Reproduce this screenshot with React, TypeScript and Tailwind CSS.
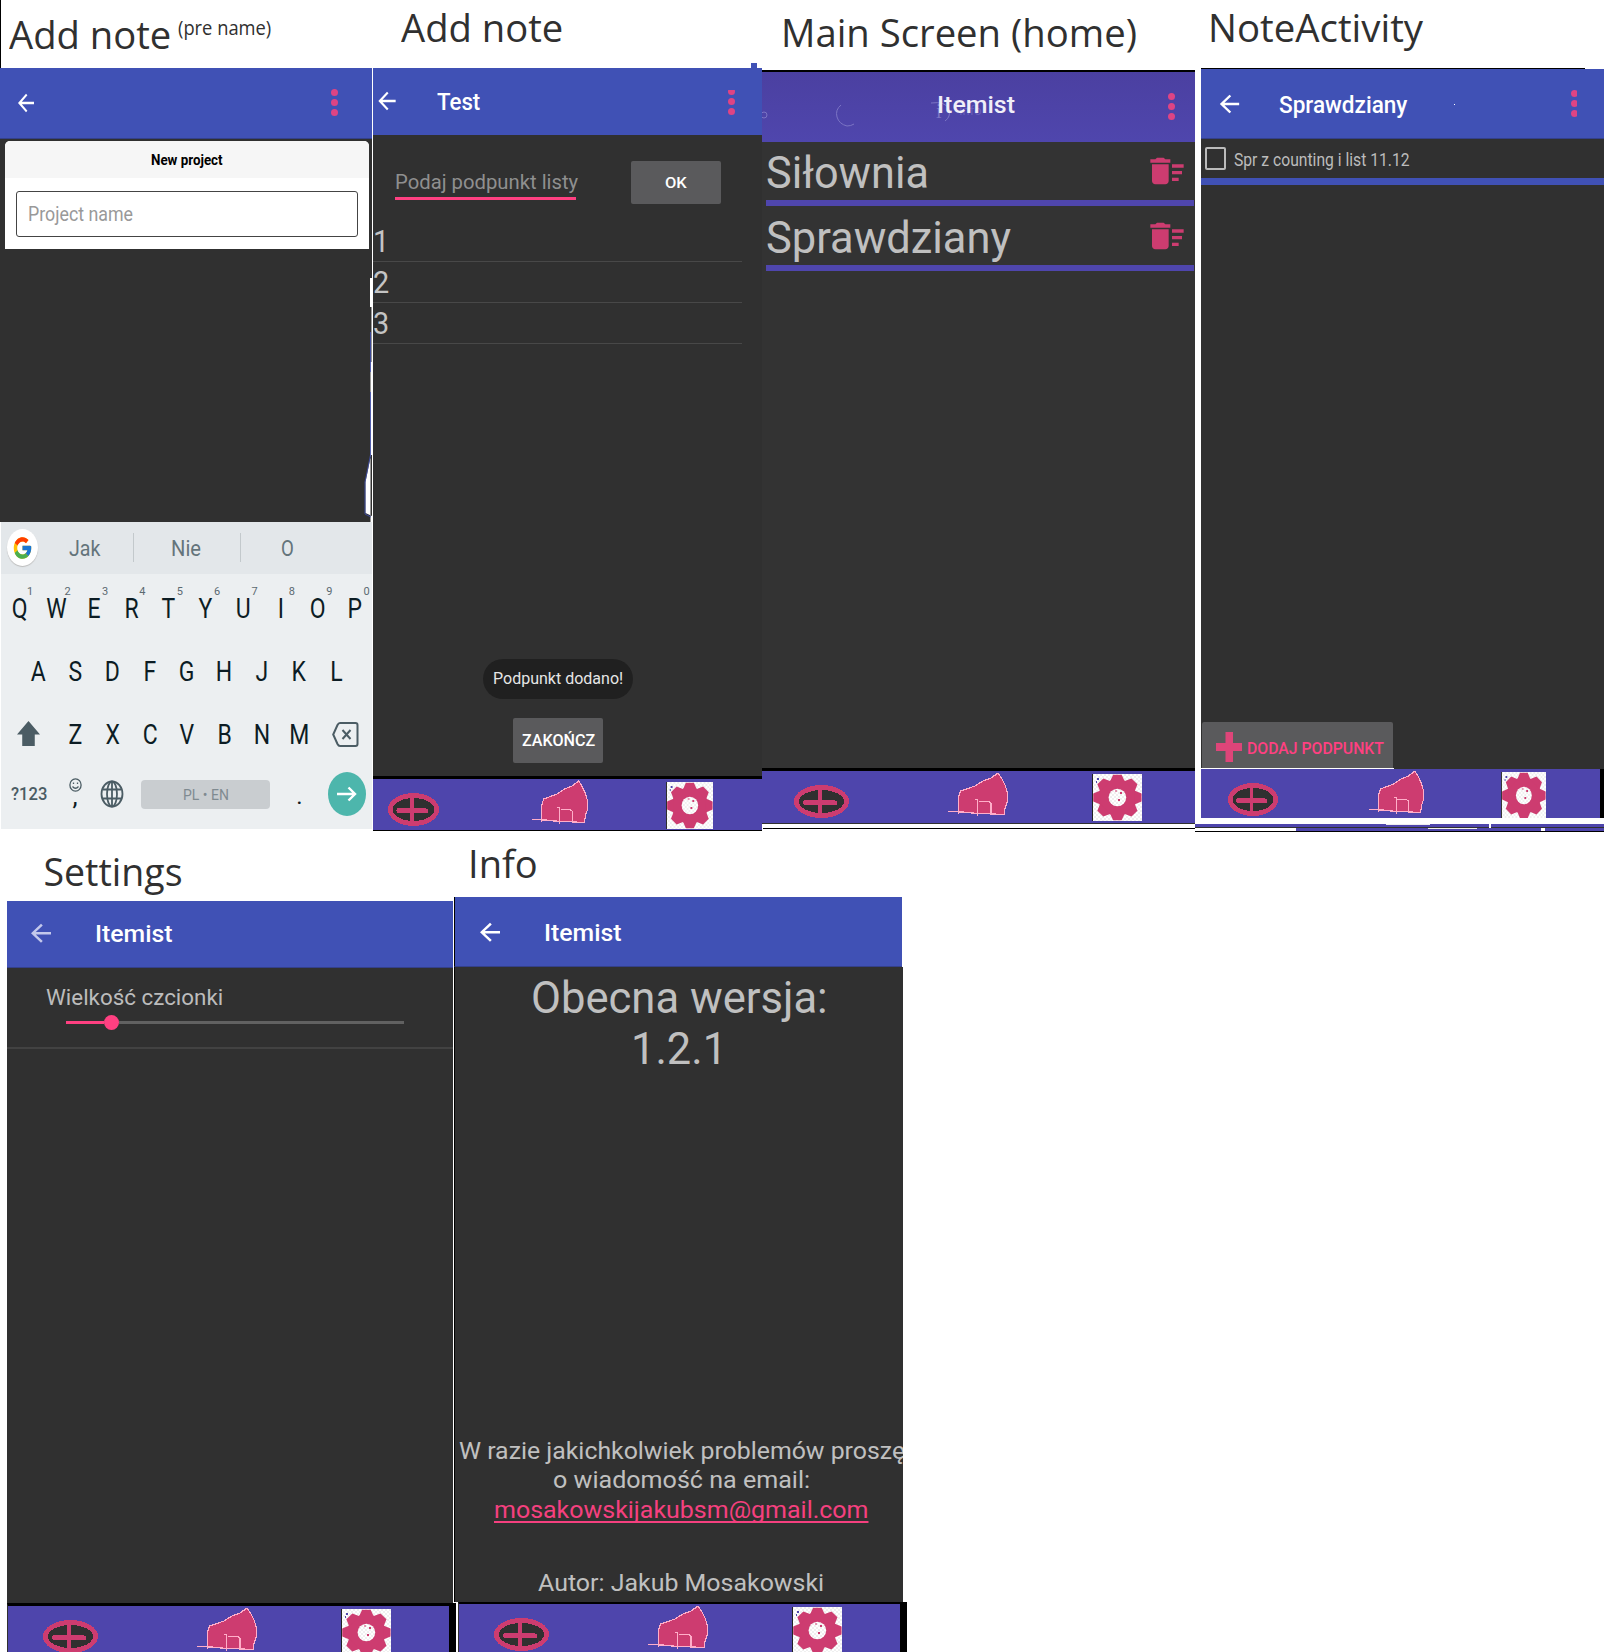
import { useLayoutEffect, useRef, useState, type ReactNode } from "react";
import { MdArrowBack, MdDeleteSweep } from "react-icons/md";
import { FcGoogle } from "react-icons/fc";

/** Single line of text stretched horizontally so that it fills exactly `w` pixels. */
function Fit({ w, className = "", children }: { w: number; className?: string; children: ReactNode }) {
  const ref = useRef<HTMLSpanElement>(null);
  const [scale, setScale] = useState(1);
  useLayoutEffect(() => {
    if (ref.current) setScale(w / ref.current.offsetWidth);
  }, [w]);
  return (
    <div className={`shrink-0 leading-none whitespace-nowrap ${className}`} style={{ width: w }}>
      <span ref={ref} className="inline-block origin-left align-top leading-none" style={{ transform: `scaleX(${scale})` }}>
        {children}
      </span>
    </div>
  );
}

function Title({ w, className, children }: { w: number; className: string; children: ReactNode }) {
  return (
    <Fit w={w} className={`font-['Open_Sans',sans-serif] text-[37.5px] text-[#303030] ${className}`}>
      {children}
    </Fit>
  );
}

function Arrow({ className }: { className: string }) {
  return <MdArrowBack preserveAspectRatio="none" className={`shrink-0 ${className}`} />;
}

function Dots({ className }: { className: string }) {
  return (
    <div className={`flex shrink-0 flex-col gap-[3px] overflow-hidden ${className}`}>
      <i className="size-[7px] shrink-0 rounded-full bg-[#de4484]" />
      <i className="size-[7px] shrink-0 rounded-full bg-[#de4484]" />
      <i className="size-[7px] shrink-0 rounded-full bg-[#de4484]" />
    </div>
  );
}

function PlusIcon({ className }: { className: string }) {
  return (
    <svg viewBox="0 0 55 33" preserveAspectRatio="none" shapeRendering="crispEdges" className={`h-[33px] shrink-0 ${className}`}>
      <ellipse cx="27.5" cy="16.5" rx="27.5" ry="16.5" fill="#cd3c70" />
      <ellipse cx="27.5" cy="16.5" rx="22.5" ry="11.5" fill="#303030" />
      <path d="M26 3v27" stroke="#cd3c70" strokeWidth="4" />
      <path d="M11.5 17.5L41 18" stroke="#cd3c70" strokeWidth="5" strokeLinecap="round" />
    </svg>
  );
}

function HouseIcon({ className }: { className: string }) {
  return (
    <svg viewBox="0 0 60 44" preserveAspectRatio="none" shapeRendering="crispEdges" className={`h-[44px] shrink-0 ${className}`}>
      <path
        d="M50 1L43 6 35 9 27 14 12.5 19 10.5 25V40L24 41 56.5 42.5 57 36 59.3 30V20L57 13 54 7Z"
        fill="#cd3c70"
        stroke="#ffaec9"
        strokeWidth="1.2"
      />
      <path d="M0 39.5H11L24 41M10.5 38v4M27 27.5h2.6V44M31 29.5h9.5l2.5 1.5V42.5" fill="none" stroke="#ffaec9" strokeWidth="1.2" />
    </svg>
  );
}

function GearIcon({ className }: { className: string }) {
  return (
    <svg viewBox="0 0 50 47" preserveAspectRatio="none" className={`h-[47px] shrink-0 ${className}`}>
      <defs>
        <pattern id="checker" width="4" height="4" patternUnits="userSpaceOnUse">
          <path d="M0 0h4v4H0z" fill="#fff" />
          <path d="M0 0h2v2H0zM2 2h2v2H2z" fill="#f0f0f0" />
        </pattern>
      </defs>
      <path d="M0 0h50v47H0z" fill="url(#checker)" />
      <path d="M0 0h1v47H0z" fill="#222" />
      <path d="M5 4h2v2H5zM4 7h1v2H4z" fill="#4e45ac" />
      <g transform="translate(25.4 23.5) scale(1.06 1)" fill="#cd3c70">
        <circle r="18" />
        {[0, 45, 90, 135, 180, 225, 270, 315].map((a) => (
          <path key={a} d="M-4-22.8H4L7-16H-7Z" transform={`rotate(${a})`} />
        ))}
      </g>
      <circle cx="25.4" cy="23.5" r="8.8" fill="url(#checker)" />
      <path d="M23 16.500h2v1h-2zM28 18h2v2h-2zM26 25h2v2h-2z" fill="#cd3c70" />
    </svg>
  );
}

function Keys({ letters, className }: { letters: string; className: string }) {
  return (
    <div className={`flex shrink-0 ${className}`}>
      {letters.split("").map((c) => (
        <span key={c} className="flex w-[37.33px] shrink-0 justify-center">
          <span className="-ml-px scale-x-[.82] text-[28px] leading-none text-[#0c1c24]">{c}</span>
        </span>
      ))}
    </div>
  );
}

function Keyboard() {
  return (
    <div className="ml-px h-[307px] w-[372px] overflow-hidden bg-[#eceff1]">
      <div className="flex h-[52px] bg-[#e3e7ea] text-[21.5px] text-[#64747b]">
        <div className="mt-[7px] ml-[6px] flex h-[37px] w-[31px] shrink-0 items-center justify-center rounded-[50%] bg-white shadow-[0_1px_1px_#bbb]">
          <FcGoogle preserveAspectRatio="none" className="h-[26px] w-[21px]" />
        </div>
        <Fit w={31} className="mt-[16px] ml-[31px]">Jak</Fit>
        <i className="mt-[11px] ml-[33px] h-[29px] w-px bg-[#c3c9cc]" />
        <Fit w={30} className="mt-[16px] ml-[37px]">Nie</Fit>
        <i className="mt-[11px] ml-[39px] h-[29px] w-px bg-[#c3c9cc]" />
        <Fit w={13} className="mt-[16px] ml-[40px]">O</Fit>
      </div>
      <div className="flex h-[21px] pt-[12px] pl-[10.500px] text-[11px] leading-none text-[#5b6970]">
        {"1234567890".split("").map((n) => (
          <span key={n} className="w-[37.4px] shrink-0 text-center">{n}</span>
        ))}
      </div>
      <Keys letters="QWERTYUIOP" className="h-[63px]" />
      <Keys letters="ASDFGHJKL" className="h-[63px] pl-[18.500px]" />
      <div className="flex h-[48px]">
        <svg viewBox="0 0 22 24" preserveAspectRatio="none" className="ml-[16px] h-[25px] w-[23px] shrink-0 fill-[#4b5c64]">
          <path d="M11 0L22 13H17V24H5V13H0Z" />
        </svg>
        <Keys letters="ZXCVBNM" className="ml-[17px]" />
        <svg viewBox="0 0 27 25" className="mt-[1px] ml-[14px] h-[25px] w-[27px] shrink-0 fill-none stroke-[#4b5c64] stroke-2">
          <path d="M8 1H23.500Q25.500 1 25.500 3V22Q25.500 24 23.500 24H8Q6.500 24 5.500 22L1.200 12.500 5.500 3Q6.500 1 8 1ZM10.500 8l8 9M18.500 8l-8 9" />
        </svg>
      </div>
      <div className="flex">
        <Fit w={36} className="mt-[17px] ml-[9.500px] text-[17.5px] font-medium text-[#4b5c64]">?123</Fit>
        <div className="ml-[22px] flex w-[13px] flex-col items-center pt-[9px]">
          <svg viewBox="0 0 13 14" className="h-[14px] w-[13px] fill-none stroke-[#4b5c64] stroke-[1.300]">
            <ellipse cx="6.500" cy="7" rx="5.600" ry="6.200" />
            <path d="M4.500 4.500v1.500M8.500 4.500v1.500M3.500 8.500q3 3.500 6 0" />
          </svg>
          <span className="-mt-[9px] text-[26px] leading-none text-[#0c1c24]">,</span>
        </div>
        <svg viewBox="0 0 24 28" preserveAspectRatio="none" className="mt-[11px] ml-[18.500px] h-[28px] w-[24px] shrink-0 fill-none stroke-[#4b5c64] stroke-[1.800]">
          <ellipse cx="12" cy="14" rx="10.500" ry="12.500" />
          <ellipse cx="12" cy="14" rx="5" ry="12.500" />
          <path d="M12 1.500v25M2.500 9.500h19M2.500 18.500h19" />
        </svg>
        <div className="mt-[11px] ml-[17px] flex h-[29px] w-[129px] shrink-0 justify-center rounded bg-[#c9cdd0] pt-[7.500px] text-[15.5px] text-[#7f8a90]">
          <Fit w={46}>PL • EN</Fit>
        </div>
        <span className="mt-[15px] ml-[25.500px] w-[8px] text-center text-[24px] leading-none text-[#0c1c24]">.</span>
        <div className="mt-[3px] ml-[24px] flex h-[44px] w-[38px] shrink-0 items-center justify-center rounded-[50%] bg-[#4db6ac]">
          <svg viewBox="0 0 20 16" className="h-[16px] w-[20px] fill-none stroke-white stroke-[2.400]">
            <path d="M0 8H18M11.500 1.500L18 8l-6.500 6.500" />
          </svg>
        </div>
      </div>
    </div>
  );
}

function PreNameScreen() {
  return (
    <section className="h-[833px] w-[372px] shrink-0">
      <div className="flex h-[68px] border-l border-black">
        <Title w={162} className="mt-[16px] ml-[8px]">Add note</Title>
        <Fit w={93} className="mt-[18px] ml-[7px] font-['Open_Sans',sans-serif] text-[19.5px] text-[#303030]">(pre name)</Fit>
      </div>
      <div className="flex h-[71px] border-b border-[#34408a] bg-[#4051b5]">
        <Arrow className="mt-[21px] ml-[14px] h-[28px] w-[24px] text-white" />
        <Dots className="mt-[21px] ml-[293px] gap-[3.500px]" />
      </div>
      <div className="relative h-[383px] bg-[#303030] pt-[2px] pl-[5px]">
        <div className="h-[108px] w-[364px] overflow-hidden rounded-t-[5px] bg-white">
          <div className="flex h-[37px] justify-center bg-[#f6f6f6] pt-[12px]">
            <Fit w={72} className="text-[15px] font-bold text-black">New project</Fit>
          </div>
          <div className="mt-[13px] ml-[11px] h-[46px] w-[342px] rounded-[3px] border-[1.500px] border-[#444] pt-[12px] pl-[10.500px]">
            <Fit w={105} className="text-[20px] text-[#999]">Project name</Fit>
          </div>
        </div>
        <svg viewBox="0 0 8 380" className="absolute top-[3px] right-0 h-[380px] w-[8px]">
          <path d="M6 136H8V380H6.500V220H7.500V165H6ZM7 313L1.500 340V371L8 374V313Z" fill="#fff" />
          <path d="M6.500 190V230M6.500 250V313L1 340V372L7 375" fill="none" stroke="#4051b5" strokeWidth="0.8" />
        </svg>
      </div>
      <Keyboard />
    </section>
  );
}

function AddNoteScreen() {
  return (
    <section className="h-[833px] w-[389px] shrink-0">
      <div className="flex h-[68px]">
        <Title w={162} className="mt-[9px] ml-[28px]">Add note</Title>
        <i className="mt-[63px] ml-[188px] h-[5px] w-[6px] bg-[#4051b5]" />
      </div>
      <div className="flex h-[67px] bg-[#4051b5]">
        <Arrow className="mt-[18.500px] ml-[0.500px] h-[28px] w-[26px] text-white" />
        <Fit w={43.5} className="mt-[22px] ml-[37px] text-[24px] font-medium text-white">Test</Fit>
        <div className="mt-[22px] ml-[248px] flex h-[25px] flex-col justify-end overflow-hidden">
          <Dots className="shrink-0" />
        </div>
      </div>
      <div className="flex h-[641px] flex-col bg-[#303030]">
        <div className="flex h-[86px]">
          <div className="mt-[38px] ml-[22px] h-[27px] w-[181px] border-b-[3px] border-[#ff4081]">
            <Fit w={183} className="text-[19.5px] text-[#8f8f8f]">Podaj podpunkt listy</Fit>
          </div>
          <div className="mt-[26px] ml-[55px] flex h-[43px] w-[90px] justify-center rounded-[2px] bg-[#5a5a5c] pt-[14.500px]">
            <Fit w={22} className="text-[15px] font-medium text-white">OK</Fit>
          </div>
        </div>
        {["1", "2", "3"].map((n) => (
          <div key={n} className="h-[41px] w-[369px] border-b border-[#484848] pt-[4px] text-[32px] leading-none text-[#c4c4c4]">
            <span className="inline-block origin-left scale-x-90">{n}</span>
          </div>
        ))}
        <div className="mt-[315px] ml-[110px] flex h-[40px] w-[150px] justify-center rounded-full bg-[#202020] pt-[11px]">
          <Fit w={130} className="text-[17px] text-[#e6e6e6]">Podpunkt dodano!</Fit>
        </div>
        <div className="mt-[19px] ml-[140px] flex h-[45px] w-[90px] justify-center rounded-[2px] bg-[#5a5a5c] pt-[14px]">
          <Fit w={73} className="text-[17px] font-medium text-white">ZAKOŃCZ</Fit>
        </div>
      </div>
      <div className="flex h-[55px] border-t-[3px] border-b border-black bg-[#4e45ac]">
        <PlusIcon className="mt-[14px] ml-[15px] w-[51px]" />
        <HouseIcon className="mt-px ml-[93px] w-[56px]" />
        <GearIcon className="mt-[3px] ml-[78px] w-[47px]" />
      </div>
    </section>
  );
}

function NoteRow({ w, className, children }: { w: number; className: string; children: ReactNode }) {
  return (
    <div className={`flex flex-col justify-between ${className}`}>
      <div className="flex justify-between">
        <Fit w={w} className="mt-[9px] ml-[4px] text-[44.3px] text-[#c0c0c0]">{children}</Fit>
        <MdDeleteSweep className="mt-[9px] mr-[8px] size-[40px] text-[#cd3c70]" />
      </div>
      <div className="ml-[4px] h-[6px] w-[428px] bg-[#4f46ad]" />
    </div>
  );
}

function HomeScreen() {
  return (
    <section className="h-[833px] w-[433px] shrink-0">
      <div className="h-[70px]">
        <div className="flex">
          <Title w={356} className="mt-[14px] ml-[19px]">Main Screen (home)</Title>
        </div>
      </div>
      <div className="relative flex h-[72px] border-t-2 border-black bg-linear-to-b from-[#4b40a1] to-[#4f46ad]">
        <svg viewBox="0 0 433 70" className="absolute inset-0 h-[70px] w-[433px] fill-none stroke-[#7b74c4] stroke-1">
          <path d="M79 33q-6 5-4 12t10 9q4 0 7-2M169 31q14-2 18 6q2 8-4 12" />
          <circle cx="2" cy="43" r="3" />
        </svg>
        <span className="absolute top-[29px] left-[174px] font-['Liberation_Serif',serif] text-[20px] leading-none text-[#7b74c4]">i</span>
        <span className="absolute top-[32px] left-[197px] text-[13px] leading-none text-[#665dba]">Info</span>
        <Fit w={78} className="relative mt-[21px] ml-[175px] text-[24px] font-medium text-[#f0eef8]">Itemist</Fit>
        <Dots className="mt-[21px] ml-[153px]" />
      </div>
      <div className="h-[626px] bg-[#333]">
        <NoteRow w={163} className="h-[64px]">Siłownia</NoteRow>
        <NoteRow w={245} className="h-[65px] pt-px">Sprawdziany</NoteRow>
      </div>
      <div className="flex h-[56px] border-t-[3px] border-b border-black border-b-[#303030] bg-[#4e45ac]">
        <PlusIcon className="mt-[14px] ml-[32px] w-[55px]" />
        <HouseIcon className="mt-px ml-[99px] w-[60px]" />
        <GearIcon className="mt-[3px] ml-[84px] w-[50px]" />
      </div>
      <div className="ml-px h-[5px] border-b border-black" />
    </section>
  );
}

function NoteActivityScreen() {
  return (
    <section className="h-[833px] w-[409px] shrink-0">
      <div className="h-[69px] pl-[6px]">
        <div className="flex h-[68px]">
          <Title w={215} className="mt-[8.500px] ml-[7px]">NoteActivity</Title>
        </div>
        <div className="h-px w-[384px] bg-black" />
      </div>
      <div className="ml-[6px] w-[403px]">
        <div className="flex h-[70px] border-b border-[#34408a] bg-[#4051b5]">
          <Arrow className="mt-[20.500px] ml-[14px] h-[28px] w-[29px] text-white" />
          <Fit w={128} className="mt-[23.500px] ml-[35px] text-[24.5px] font-medium text-white">Sprawdziany</Fit>
          <i className="mt-[35px] ml-[47px] size-px bg-white" />
          <Dots className="mt-[21px] ml-[116px] w-[6px]" />
        </div>
        <div className="flex h-[39px] bg-[#303030]">
          <i className="mt-[8px] ml-[4px] h-[23px] w-[21px] rounded-[2px] border-2 border-[#bbb]" />
          <Fit w={176} className="mt-[11.500px] ml-[7.500px] text-[18px] text-[#bcbcbc]">Spr z counting i list 11.12</Fit>
        </div>
        <div className="h-[7px] bg-[#4051b5]" />
        <div className="flex h-[584px] flex-col justify-end bg-[#303030]">
          <div className="ml-px flex h-[46px] w-[191px] rounded-t-[2px] bg-[#5a5a5c]">
            <svg viewBox="0 0 26 30" className="mt-[10px] ml-[14px] h-[30px] w-[26px] fill-[#de4579]">
              <path d="M9.500 0h7.500v11h9v8h-9v11H9.500V19H0v-8h9.500z" />
            </svg>
            <Fit w={137} className="mt-[18px] ml-[4.500px] text-[17.3px] font-medium text-[#ff4081]">DODAJ PODPUNKT</Fit>
          </div>
          <div className="h-px w-[193px] bg-white" />
        </div>
        <div className="flex h-[49px] overflow-hidden border-r-[4px] border-black bg-[#4e45ac]">
          <PlusIcon className="mt-[14px] ml-[27px] w-[50px]" />
          <HouseIcon className="mt-px ml-[91px] w-[55px]" />
          <GearIcon className="mt-[3px] ml-[77px] w-[45px]" />
        </div>
      </div>
      <div className="mt-[6px] flex h-[4px]">
        <div className="flex w-[294px] border-b border-[#303030] bg-[#4e45ac]">
          <i className="ml-[191px] h-px w-[44px] bg-[#eee]" />
        </div>
        <div className="ml-[2px] flex-1 border-b border-[#303030] bg-[#4e45ac]" />
      </div>
      <div className="flex h-[4px] border-b border-black">
        <div className="ml-[101px] w-[132px] bg-[#4e45ac]" />
        <div className="w-[49px] border-t border-[#eee] bg-[#4e45ac]" />
        <div className="w-[64px] bg-[#4e45ac]" />
        <div className="ml-[4px] flex-1 bg-[#4e45ac]" />
      </div>
    </section>
  );
}

function SettingsScreen() {
  return (
    <section className="flex w-[454px] shrink-0 flex-col pl-[7px]">
      <div className="h-[68px]">
        <div className="flex">
          <Title w={139} className="mt-[20px] ml-[36.500px]">Settings</Title>
        </div>
      </div>
      <div className="flex h-[67px] w-[446px] border-b border-[#34408a] bg-[#4051b5]">
        <Arrow className="mt-[17.500px] ml-[19px] h-[28.500px] w-[30px] text-[#c3c8ec]" />
        <Fit w={78} className="mt-[20.500px] ml-[39px] text-[24.5px] font-medium text-white">Itemist</Fit>
      </div>
      <div className="h-[635px] w-[446px] bg-[#303030]">
        <div className="h-[81px] border-b-2 border-[#424242] pt-[18px] pl-[38.500px]">
          <Fit w={177} className="text-[22.5px] text-[#bcbcbc]">Wielkość czcionki</Fit>
          <div className="mt-[6px] ml-[20px] flex h-[16px] items-center">
            <i className="h-[3px] w-[38px] bg-[#ff4081]" />
            <i className="size-[15px] rounded-full bg-[#ff4081]" />
            <i className="h-[3px] w-[285px] bg-[#616161]" />
          </div>
        </div>
      </div>
      <div className="-mr-[2px] flex h-[49px] overflow-hidden border-t-[3px] border-r-[7px] border-l border-black border-l-[#303030] bg-[#4e45ac]">
        <PlusIcon className="mt-[14px] ml-[35px] w-[55px]" />
        <HouseIcon className="mt-px ml-[99px] w-[60px]" />
        <GearIcon className="mt-[3px] ml-[84px] w-[50px]" />
      </div>
    </section>
  );
}

function InfoScreen() {
  return (
    <section className="flex w-[453px] shrink-0 flex-col">
      <div className="h-[64px]">
        <div className="flex">
          <Title w={70} className="mt-[12px] ml-[14px]">Info</Title>
        </div>
      </div>
      <div className="flex h-[70px] w-[448px] border-b border-l border-[#34408a] border-l-black bg-[#4051b5]">
        <Arrow className="mt-[20.500px] ml-[20px] h-[28.500px] w-[30px] text-white" />
        <Fit w={78} className="mt-[23.500px] ml-[39px] text-[24.5px] font-medium text-white">Itemist</Fit>
      </div>
      <div className="flex h-[635px] w-[449px] flex-col items-center overflow-hidden border-l border-black bg-[#303030] text-[#c0c0c0]">
        <Fit w={297} className="mt-[9px] text-[44.3px]">Obecna wersja:</Fit>
        <Fit w={96} className="mt-[7px] text-[44.3px]">1.2.1</Fit>
        <Fit w={446} className="mt-[367px] ml-[5px] text-[24.5px]">W razie jakichkolwiek problemów proszę</Fit>
        <Fit w={257} className="mt-[5px] ml-[5px] text-[24.5px]">o wiadomość na email:</Fit>
        <Fit w={374} className="mt-[5px] ml-[4px] text-[24.5px] text-[#f5407f]">
          <u className="decoration-[1.500px] underline-offset-[3px] [text-decoration-skip-ink:none]">mosakowskijakubsm@gmail.com</u>
        </Fit>
        <Fit w={286} className="mt-[48.500px] ml-[3px] text-[24.5px]">Autor: Jakub Mosakowski</Fit>
      </div>
      <div className="ml-[2px] flex h-[50px] overflow-hidden border-l-2 border-white">
        <div className="flex w-[449px] shrink-0 overflow-hidden border-t-2 border-r-[7px] border-l border-black border-l-[#303030] bg-[#4e45ac]">
          <PlusIcon className="mt-[14px] ml-[35px] w-[55px]" />
          <HouseIcon className="mt-px ml-[99px] w-[60px]" />
          <GearIcon className="mt-[3px] ml-[84px] w-[50px]" />
        </div>
      </div>
    </section>
  );
}

export default function App() {
  return (
    <main className="h-[1652px] w-[1606px] overflow-hidden bg-white font-[Roboto,sans-serif]">
      <div className="flex h-[833px]">
        <PreNameScreen />
        <div className="h-[833px] w-px shrink-0 bg-white" />
        <AddNoteScreen />
        <HomeScreen />
        <NoteActivityScreen />
      </div>
      <div className="flex h-[819px] overflow-hidden">
        <SettingsScreen />
        <InfoScreen />
      </div>
    </main>
  );
}
